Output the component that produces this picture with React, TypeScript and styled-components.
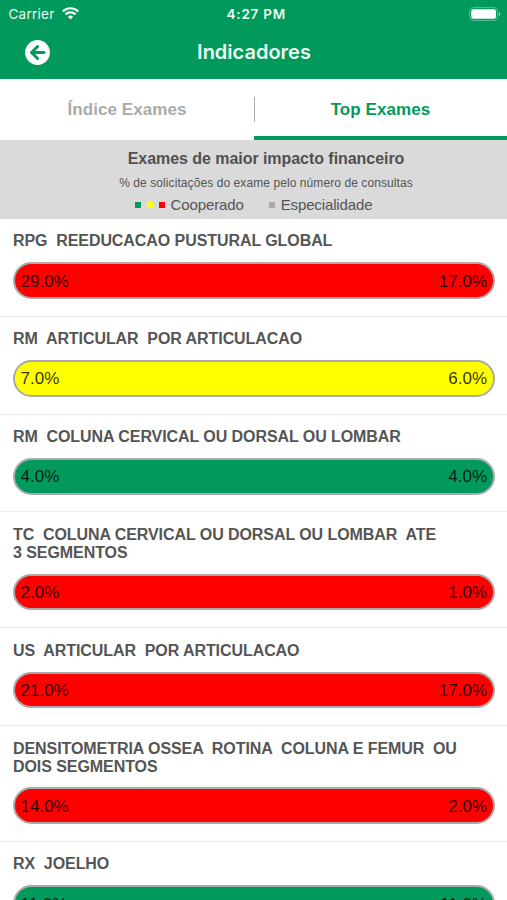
import React from 'react';
import styled, { createGlobalStyle } from 'styled-components';

const GREEN = '#02995c';

const GlobalStyle = createGlobalStyle`
  * { box-sizing: border-box; }
  html, body { margin: 0; height: 100%; overflow: hidden; background: #fff; }
  body { font-family: "Liberation Sans", Arial, sans-serif; color: #555; }
`;

const Screen = styled.main`
  width: 507px;
  height: 900px;
  overflow: hidden;
  display: flex;
  flex-direction: column;
  background: #fff;
`;

const Header = styled.header`
  flex: none;
  height: 79px;
  background: ${GREEN};
  color: #e9fbf1;
  font-family: Inter, sans-serif;
`;

const StatusBar = styled.div`
  height: 27px;
  padding: 0 6px 0 8.5px;
  display: grid;
  grid-template-columns: 1fr auto 1fr;
  align-items: center;
  font-size: 13.5px;
`;

const Carrier = styled.div`
  display: flex;
  align-items: center;
  gap: 7px;
  letter-spacing: 0.25px;
`;

const Clock = styled.div`
  font-weight: 600;
  letter-spacing: 0.75px;
  padding-left: 3px;
`;

const Battery = styled.svg`
  justify-self: end;
`;

const NavBar = styled.div`
  height: 50px;
  display: grid;
  grid-template-columns: 75px 1fr 74px;
  align-items: center;
  justify-items: center;
`;

const BackButton = styled.button`
  padding: 0;
  border: 0;
  background: none;
  display: flex;
`;

const Title = styled.h1`
  margin: 0;
  font-size: 20px;
  line-height: 24px;
  font-weight: 600;
`;

const Tabs = styled.nav`
  flex: none;
  height: 61px;
  display: grid;
  grid-template-columns: 254px 1fr;
`;

const Tab = styled.button<{ $active?: boolean }>`
  position: relative;
  padding: 5px 0 0;
  border: 0;
  border-bottom: 4px solid ${p => (p.$active ? GREEN : '#fff')};
  background: #fff;
  color: ${p => (p.$active ? GREEN : '#aaa')};
  font: bold 17px/20px "Liberation Sans", Arial, sans-serif;
  letter-spacing: 0.08px;
`;

const Divider = styled.span`
  position: absolute;
  right: -1px;
  top: 18px;
  width: 1px;
  height: 25px;
  background: #aaa;
  z-index: 1;
`;

const Legend = styled.section`
  flex: none;
  height: 79px;
  padding: 9px 0 0 25px;
  background: #dadada;
  display: flex;
  flex-direction: column;
  align-items: center;
`;

const LegendTitle = styled.h2`
  margin: 0;
  font-size: 16px;
  line-height: 20px;
  letter-spacing: -0.05px;
  color: #505050;
`;

const LegendNote = styled.div`
  margin-top: 6px;
  font-size: 12px;
  line-height: 16px;
  letter-spacing: 0.08px;
`;

const Keys = styled.div`
  display: flex;
  align-items: center;
  margin: 5px 25px 0 0;
  font-size: 15px;
  line-height: 18px;
  letter-spacing: -0.13px;
`;

const Swatch = styled.i<{ $color: string }>`
  width: 6px;
  height: 6px;
  margin-right: 6px;
  background: ${p => p.$color};
`;

const KeyLabel = styled.span`
  margin-right: 25px;
  &:last-child { margin-right: 0; }
`;

const List = styled.ul`
  margin: 0;
  padding: 0;
  list-style: none;
`;

const Row = styled.li`
  padding: 13.4px 12.5px 16.9px 13px;
  border-bottom: 1px solid #ececec;
`;

const ExamName = styled.div`
  font-size: 16px;
  font-weight: bold;
  line-height: 18px;
  letter-spacing: -0.07px;
  white-space: pre;
`;

const Bar = styled.div<{ $color: string }>`
  height: 36.75px;
  margin-top: 11.8px;
  padding: 2px 5.5px 0;
  border: 2px solid #aaa;
  border-radius: 19px;
  background: ${p => p.$color};
  display: flex;
  align-items: center;
  justify-content: space-between;
  font-size: 17px;
  color: rgba(0, 0, 0, 0.82);
`;

const RED = '#ff0000';
const YELLOW = '#ffff00';

const exams = [
  { name: 'RPG  REEDUCACAO PUSTURAL GLOBAL', own: '29.0%', group: '17.0%', color: RED },
  { name: 'RM  ARTICULAR  POR ARTICULACAO', own: '7.0%', group: '6.0%', color: YELLOW },
  { name: 'RM  COLUNA CERVICAL OU DORSAL OU LOMBAR', own: '4.0%', group: '4.0%', color: GREEN },
  { name: 'TC  COLUNA CERVICAL OU DORSAL OU LOMBAR  ATE\n3 SEGMENTOS', own: '2.0%', group: '1.0%', color: RED },
  { name: 'US  ARTICULAR  POR ARTICULACAO', own: '21.0%', group: '17.0%', color: RED },
  { name: 'DENSITOMETRIA OSSEA  ROTINA  COLUNA E FEMUR  OU\nDOIS SEGMENTOS', own: '14.0%', group: '2.0%', color: RED },
  { name: 'RX  JOELHO', own: '11.0%', group: '11.0%', color: GREEN },
];

export default function App() {
  return (
    <Screen>
      <GlobalStyle />
      <Header>
        <StatusBar>
          <Carrier>
            Carrier
            <svg width="17" height="13" viewBox="0 0 17 13" fill="none" stroke="#f3fff9" strokeWidth="2.2">
              <path d="M.8 4.4a11 11 0 0 1 15.4 0" />
              <path d="M3.5 7.4a7.2 7.2 0 0 1 10 0" />
              <path d="M5.9 9.8a3.8 3.8 0 0 1 5.2 0L8.5 12.5Z" fill="#f3fff9" stroke="none" />
            </svg>
          </Carrier>
          <Clock>4:27 PM</Clock>
          <Battery width="32" height="14" viewBox="0 0 32 14">
            <rect x=".6" y=".6" width="28" height="12.8" rx="3.6" fill="none" stroke="#5dbd92" />
            <rect x="2.2" y="2.2" width="24.8" height="9.6" rx="2" fill="#fff" />
            <path d="M30 5v4q1.5-.6 1.5-2T30 5" fill="#8cd2b2" />
          </Battery>
        </StatusBar>
        <NavBar>
          <BackButton aria-label="Voltar">
            <svg width="25" height="25" viewBox="0 0 25 25">
              <circle cx="12.5" cy="12.5" r="12.4" fill="#fff" />
              <path d="M12.6 6.5 6.5 12.5l6.1 6M7 12.5h12" fill="none" stroke={GREEN} strokeWidth="3" strokeLinecap="round" strokeLinejoin="round" />
            </svg>
          </BackButton>
          <Title>Indicadores</Title>
        </NavBar>
      </Header>
      <Tabs>
        <Tab>Índice Exames<Divider /></Tab>
        <Tab $active>Top Exames</Tab>
      </Tabs>
      <Legend>
        <LegendTitle>Exames de maior impacto financeiro</LegendTitle>
        <LegendNote>% de solicitações do exame pelo número de consultas</LegendNote>
        <Keys>
          <Swatch $color={GREEN} />
          <Swatch $color={YELLOW} />
          <Swatch $color={RED} />
          <KeyLabel>Cooperado</KeyLabel>
          <Swatch $color="#aaa" />
          <KeyLabel>Especialidade</KeyLabel>
        </Keys>
      </Legend>
      <List>
        {exams.map(exam => (
          <Row key={exam.name}>
            <ExamName>{exam.name}</ExamName>
            <Bar $color={exam.color}>
              <span>{exam.own}</span>
              <span>{exam.group}</span>
            </Bar>
          </Row>
        ))}
      </List>
    </Screen>
  );
}
